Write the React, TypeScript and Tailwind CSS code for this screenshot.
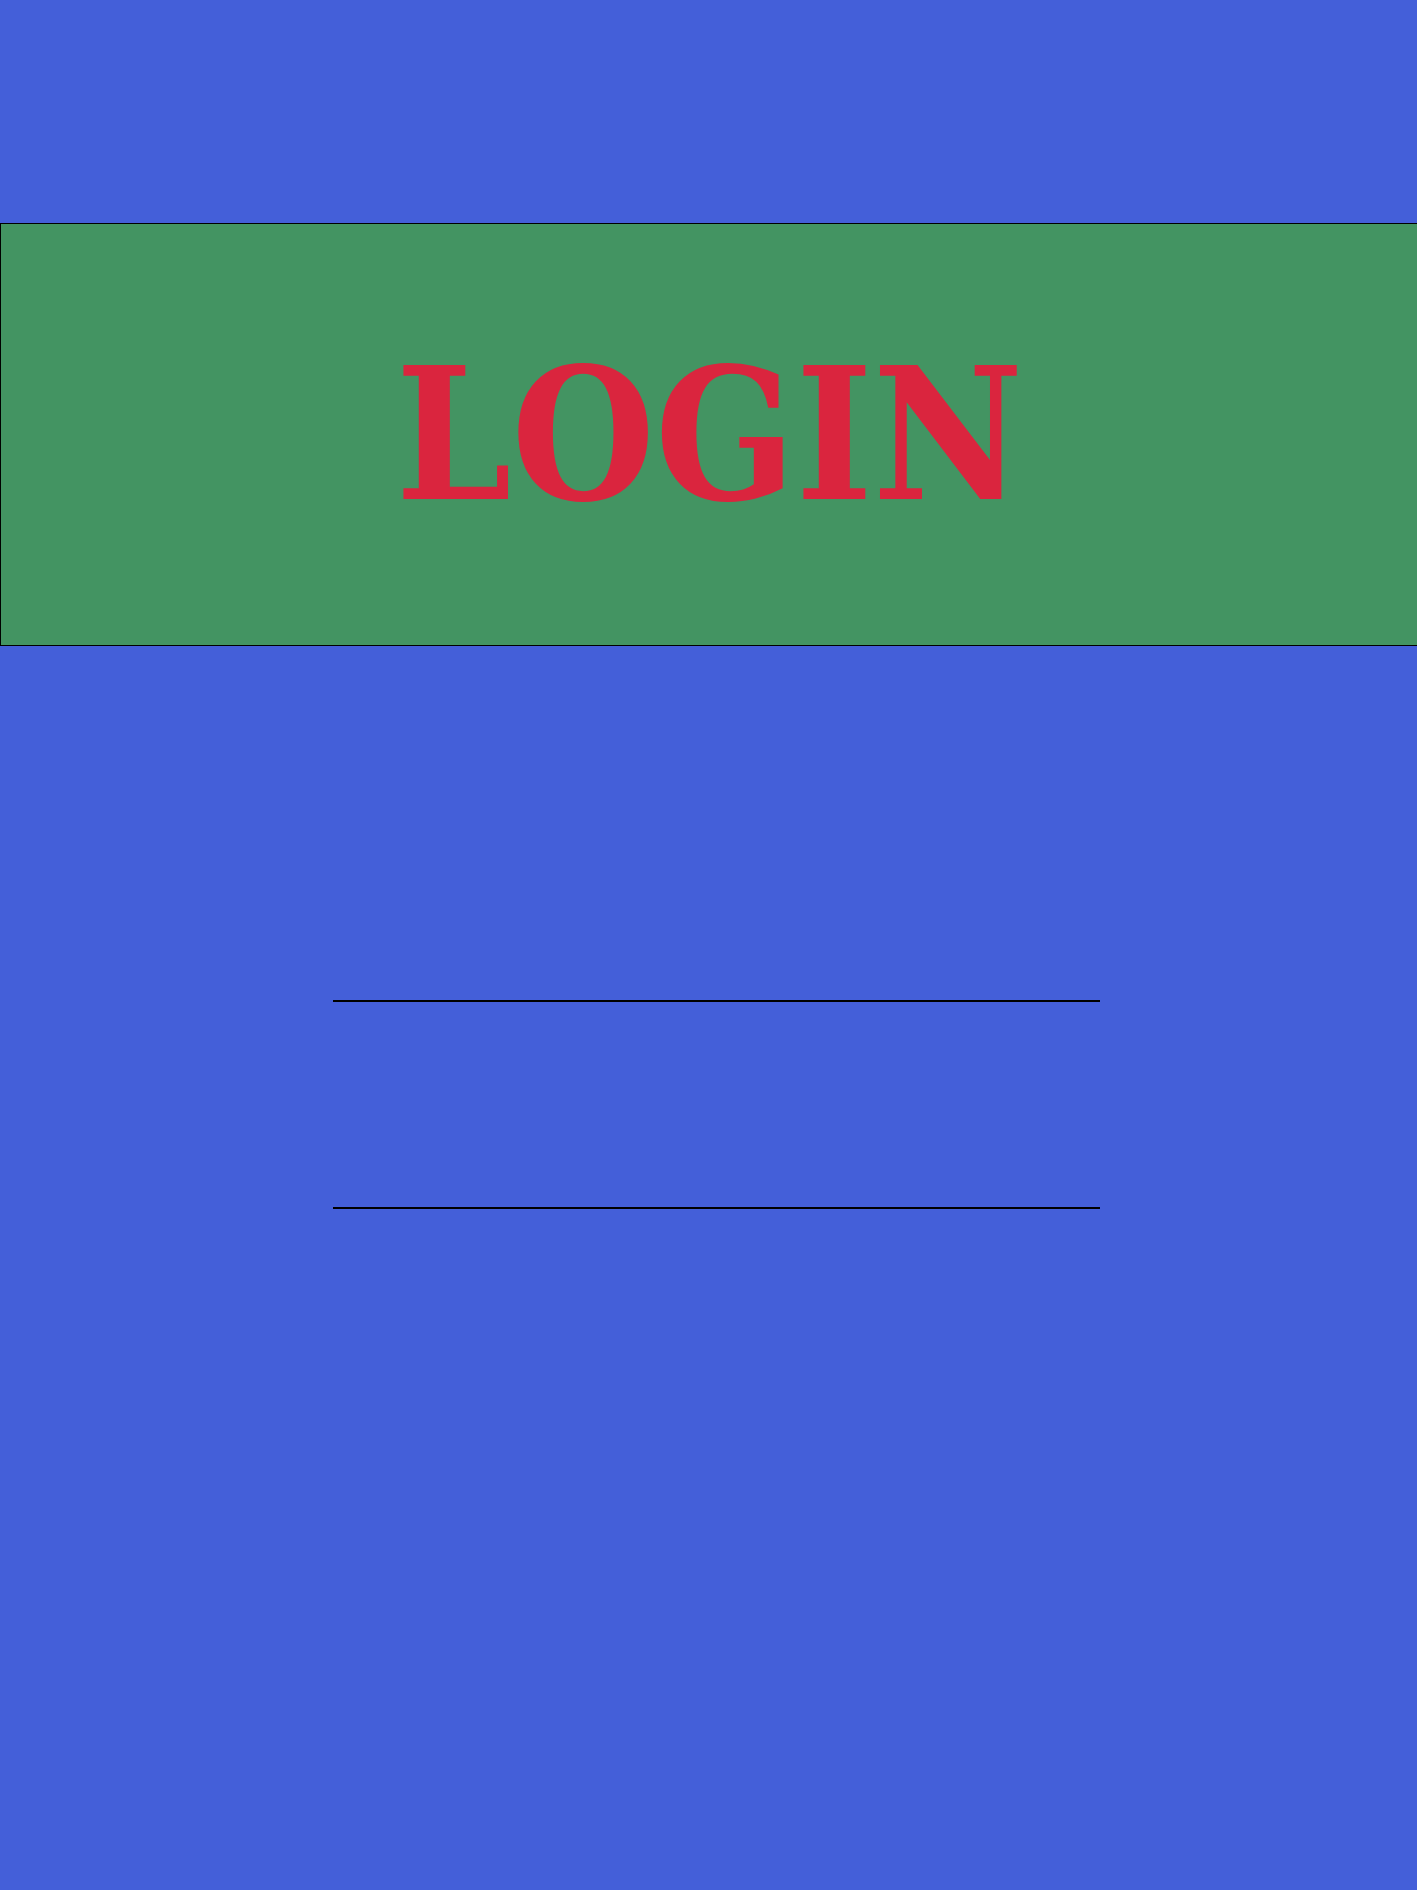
import React from 'react';

export default function App() {
  return (
    <div className="min-h-[1890px] w-full overflow-hidden bg-[#445fd9] pt-[223px]">
      {/* Header band */}
      <div className="flex h-[423px] w-[calc(100%+2px)] items-center justify-center border border-black bg-[#439462]">
        <h1 className="font-['DejaVu_Serif_Condensed','DejaVu_Serif',serif] text-[183px] font-bold font-stretch-condensed leading-none text-[#da253e]">LOGIN</h1>
      </div>

      {/* Form fields */}
      <div className="ml-[333px] mt-[354px] flex w-[767px] flex-col gap-[205px]">
        <input type="text" className="h-[2px] w-full border-b-2 border-black bg-transparent outline-none" />
        <input type="password" className="h-[2px] w-full border-b-2 border-black bg-transparent outline-none" />
      </div>
    </div>
  );
}
